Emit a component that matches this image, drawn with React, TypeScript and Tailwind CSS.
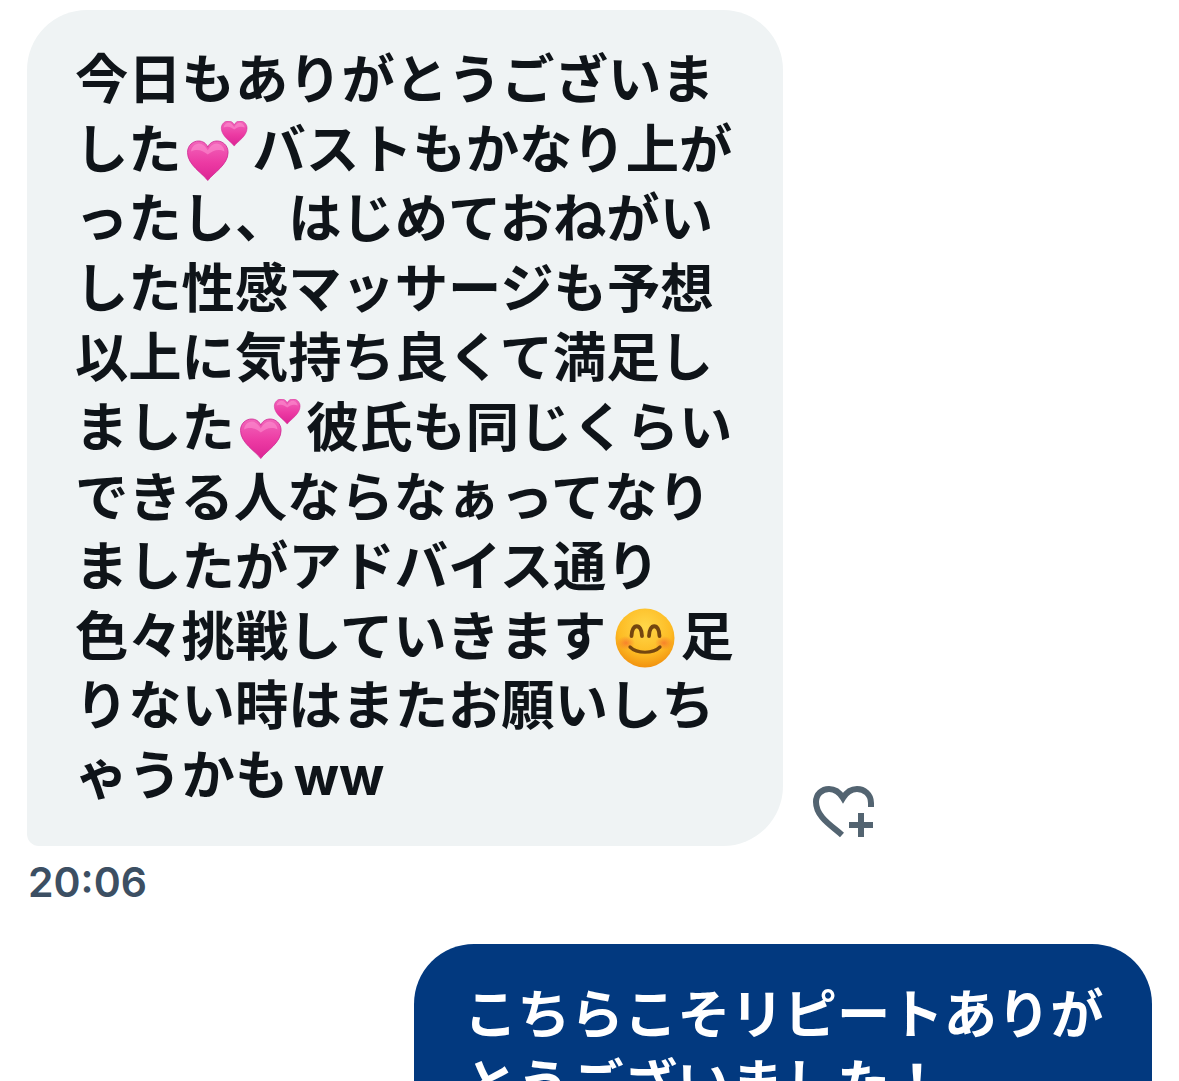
import React from "react";

const HeartShape = ({ x, y, s, id }: { x: number; y: number; s: number; id: string }) => (
  <g transform={`translate(${x} ${y}) scale(${s})`}>
    <path
      d="M20 38 C15 31 0.500 23 0.500 11 C0.500 4 6 0 11 0 C15 0 18.500 2 20 6 C21.500 2 25 0 29 0 C34 0 39.500 4 39.500 11 C39.500 23 25 31 20 38 Z"
      fill={`url(#${id})`}
      stroke="#cf2a94"
      strokeWidth="0.8"
    />
    <path
      d="M4 10 C4 6 8 2.500 11.500 2.500 C15 2.500 18 5.500 20 9 C22 5.500 25 2.500 28.500 2.500 C32 2.500 36 6 36 10 C30 7 25 9 20 13 C15 9 10 7 4 10 Z"
      fill="#ff9ad5"
      opacity="0.5"
    />
  </g>
);

// two hearts emoji, big one lower left and small one upper right
const TwoHearts = ({ id }: { id: string }) => (
  <svg width="62" height="62" viewBox="0 0 62 62" className="inline-block align-[-14px] ml-[4px] mr-[5px]">
    <defs>
      <linearGradient id={id} x1="0" y1="0" x2="0" y2="1">
        <stop offset="0" stopColor="#f266bb" />
        <stop offset="0.55" stopColor="#ec3aa3" />
        <stop offset="1" stopColor="#dc2494" />
      </linearGradient>
    </defs>
    <HeartShape x={35} y={0} s={0.66} id={id} />
    <HeartShape x={1} y={20} s={1.04} id={id} />
  </svg>
);

const SmileFace = () => (
  <svg width="60" height="60" viewBox="0 0 60 60" className="inline-block align-[-12px] ml-[9px] mr-[5px]">
    <defs>
      <radialGradient id="faceFill" cx="0.5" cy="0.32" r="0.75">
        <stop offset="0" stopColor="#ffd84a" />
        <stop offset="0.6" stopColor="#fdbb24" />
        <stop offset="1" stopColor="#ee8508" />
      </radialGradient>
      <radialGradient id="blush" cx="0.5" cy="0.5" r="0.5">
        <stop offset="0" stopColor="#f56a2c" stopOpacity="0.7" />
        <stop offset="1" stopColor="#f56a2c" stopOpacity="0" />
      </radialGradient>
    </defs>
    <circle cx="30" cy="30" r="29.500" fill="url(#faceFill)" />
    <ellipse cx="11" cy="35" rx="9" ry="7" fill="url(#blush)" />
    <ellipse cx="49" cy="35" rx="9" ry="7" fill="url(#blush)" />
    <path d="M16.500 28 C16.500 15 27 15 27 28" fill="none" stroke="#75460f" strokeWidth="3.800" strokeLinecap="round" />
    <path d="M34 28 C34 15 44.500 15 44.500 28" fill="none" stroke="#75460f" strokeWidth="3.800" strokeLinecap="round" />
    <path d="M15 39 C22 46 38 46 45 39" fill="none" stroke="#75460f" strokeWidth="3.200" strokeLinecap="round" />
  </svg>
);

const AddReaction = () => (
  <svg width="64" height="56" viewBox="0 0 64 56" fill="none" className="shrink-0">
    <path
      d="M32 52 C22 43 6 34 6 19 C6 11 12 6 19 6 C25 6 30 10 33 15 C36 10 41 6 47 6 C54 6 61 11 61 20 L61 24"
      stroke="#536471"
      strokeWidth="6"
    />
    <path d="M51 30 V54 M39 42 H63" stroke="#536471" strokeWidth="6" />
  </svg>
);

export default function App() {
  return (
    <div
      className="h-[1081px] overflow-hidden bg-white pt-[10px] pl-[27px]"
      style={{ fontFamily: '"Inter", "Noto Sans CJK JP", sans-serif' }}
    >
      {/* Incoming message */}
      <div className="flex items-end">
        <div className="w-[756px] h-[836px] bg-[#eff3f4] rounded-[60px] rounded-bl-[12px] pt-[35px] pl-[48px] text-[53.3px] leading-[69.6px] font-bold text-[#0f1419] whitespace-nowrap">
          <div>今日もありがとうございま</div>
          <div>した<TwoHearts id="heartsA" />バストもかなり上が</div>
          <div>ったし、はじめておねがい</div>
          <div>した性感マッサージも予想</div>
          <div>以上に気持ち良くて満足し</div>
          <div>ました<TwoHearts id="heartsB" />彼氏も同じくらい</div>
          <div>できる人ならなぁってなり</div>
          <div>ましたがアドバイス通り</div>
          <div>色々挑戦していきます<SmileFace />足</div>
          <div>りない時はまたお願いしち</div>
          <div className="[word-spacing:-7px]">ゃうかも ww</div>
        </div>
        <div className="ml-[27px] mb-[7px]">
          <AddReaction />
        </div>
      </div>

      <div className="mt-[11px] pl-[1px] text-[41px] leading-[50px] font-semibold text-[#3c4f63]">20:06</div>

      {/* Outgoing message, cut off by the bottom of the screenshot */}
      <div className="mt-[37px] ml-[387px] w-[738px] h-[300px] bg-[#02397f] rounded-[60px] pt-[36px] pl-[50px] text-[53.3px] leading-[69.6px] font-bold text-white whitespace-nowrap">
        <div>こちらこそリピートありが</div>
        <div>とうございました！</div>
      </div>
    </div>
  );
}
